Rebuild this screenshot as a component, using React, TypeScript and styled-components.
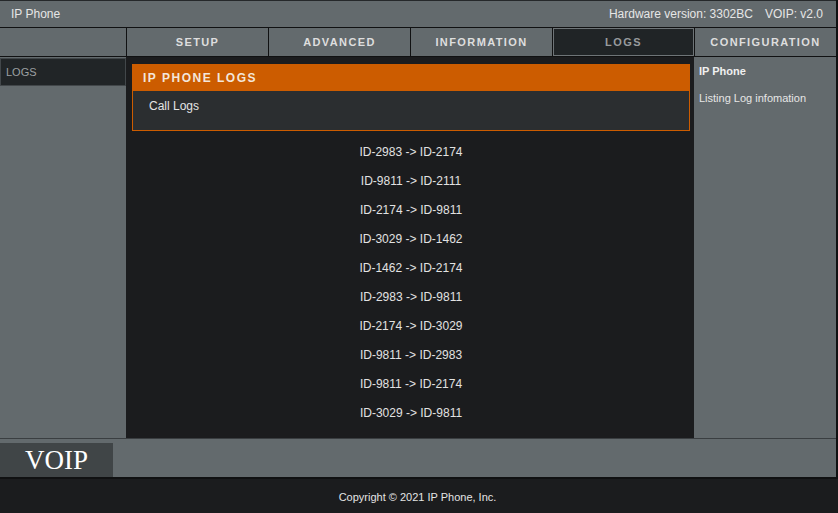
import * as React from 'react'
import styled, { createGlobalStyle } from 'styled-components'

const GRAY = '#636a6d'
const DARK = '#1b1c1e'
const EDGE = '#101112'
const ORANGE = '#cc5c00'

const tabs = ['SETUP', 'ADVANCED', 'INFORMATION', 'LOGS', 'CONFIGURATION']
const activeTab = 'LOGS'

const logs = [
  ['ID-2983', 'ID-2174'],
  ['ID-9811', 'ID-2111'],
  ['ID-2174', 'ID-9811'],
  ['ID-3029', 'ID-1462'],
  ['ID-1462', 'ID-2174'],
  ['ID-2983', 'ID-9811'],
  ['ID-2174', 'ID-3029'],
  ['ID-9811', 'ID-2983'],
  ['ID-9811', 'ID-2174'],
  ['ID-3029', 'ID-9811'],
]

const App: React.FC = () => (
  <>
    <GlobalStyle />
    <Page>
      <Header>
        <span>IP Phone</span>
        <Versions>
          <span>Hardware version: 3302BC</span>
          <span>VOIP: v2.0</span>
        </Versions>
      </Header>

      <Nav>
        <NavSpacer />
        {tabs.map((t) => (
          <Tab key={t} active={t === activeTab}>
            {t}
          </Tab>
        ))}
      </Nav>

      <Body>
        <LeftMenu>
          <MenuItem>LOGS</MenuItem>
        </LeftMenu>

        <Main>
          <Panel>
            <PanelTitle>IP PHONE LOGS</PanelTitle>
            <PanelBody>Call Logs</PanelBody>
          </Panel>
          <LogList>
            {logs.map(([from, to], i) => (
              <LogRow key={i}>
                {from} -&gt; {to}
              </LogRow>
            ))}
          </LogList>
        </Main>

        <Help>
          <HelpTitle>IP Phone</HelpTitle>
          <HelpText>Listing Log infomation</HelpText>
        </Help>
      </Body>

      <Brand>
        <BrandBox>VOIP</BrandBox>
      </Brand>
    </Page>
    <Copyright>Copyright © 2021 IP Phone, Inc.</Copyright>
  </>
)

export default App

const GlobalStyle = createGlobalStyle`
  html, body {
    margin: 0;
    padding: 0;
    background: ${DARK};
    font-family: "Liberation Sans", Arial, sans-serif;
  }
`
const Page = styled.div`
  width: 836px;
  border-right: 2px solid ${EDGE};
  border-bottom: 2px solid ${EDGE};
  background: ${GRAY};
`
const Header = styled.div`
  height: 26px;
  border-top: 1px solid #25282a;
  border-bottom: 1px solid ${EDGE};
  display: flex;
  align-items: center;
  justify-content: space-between;
  padding: 0 13px 0 11px;
  color: #e6e6e6;
  font-size: 12px;
`
const Versions = styled.div`
  display: flex;
  gap: 12px;
`
const Nav = styled.div`
  display: grid;
  grid-template-columns: 126px repeat(5, 1fr);
  gap: 1px;
  background: ${EDGE};
  border-bottom: 1px solid ${EDGE};
`
const NavSpacer = styled.div`
  background: ${GRAY};
  height: 28px;
`
const Tab = styled.div<{ active?: boolean }>`
  height: 28px;
  box-sizing: border-box;
  display: flex;
  align-items: center;
  justify-content: center;
  font-size: 11px;
  font-weight: bold;
  letter-spacing: 1.4px;
  background: ${({ active }) => (active ? '#202426' : GRAY)};
  border: 1px solid ${({ active }) => (active ? '#6e7477' : GRAY)};
  color: ${({ active }) => (active ? '#979b9d' : '#dedede')};
`
const Body = styled.div`
  display: grid;
  grid-template-columns: 126px 568px 142px;
  height: 381px;
  border-bottom: 1px solid #3a3e41;
`
const LeftMenu = styled.div`
  background: ${GRAY};
  padding-top: 1px;
`
const MenuItem = styled.div`
  height: 28px;
  box-sizing: border-box;
  border: 1px solid #42474a;
  background: #212527;
  color: #9ca0a2;
  font-size: 11px;
  padding-left: 5px;
  display: flex;
  align-items: center;
`
const Main = styled.div`
  background: ${DARK};
  padding: 7px 4px 0 6px;
`
const Panel = styled.div`
  border: 1px solid ${ORANGE};
`
const PanelTitle = styled.div`
  height: 26px;
  background: ${ORANGE};
  color: #f3e6da;
  font-size: 12px;
  font-weight: bold;
  letter-spacing: 1.5px;
  padding-left: 10px;
  display: flex;
  align-items: center;
`
const PanelBody = styled.div`
  height: 39px;
  background: #2b2e30;
  color: #e4e4e4;
  font-size: 12px;
  padding: 8px 0 0 16px;
  box-sizing: border-box;
`
const LogList = styled.div`
  padding-top: 7px;
`
const LogRow = styled.div`
  height: 29px;
  line-height: 29px;
  text-align: center;
  color: #e2e2e2;
  font-size: 12px;
`
const Help = styled.div`
  background: ${GRAY};
  padding: 8px 5px 0;
`
const HelpTitle = styled.div`
  color: #f0f0f0;
  font-size: 11px;
  font-weight: bold;
`
const HelpText = styled.div`
  color: #e6e6e6;
  font-size: 11px;
  margin-top: 15px;
`
const Brand = styled.div`
  height: 38px;
  padding-top: 4px;
  box-sizing: border-box;
`
const BrandBox = styled.div`
  width: 113px;
  height: 34px;
  background: #404547;
  color: #ffffff;
  font-family: "Liberation Serif", "Times New Roman", serif;
  font-size: 27px;
  display: flex;
  align-items: center;
  justify-content: center;
`
const Copyright = styled.div`
  height: 35px;
  display: flex;
  align-items: center;
  justify-content: center;
  padding-right: 3px;
  color: #e4e4e4;
  font-size: 11px;
`
